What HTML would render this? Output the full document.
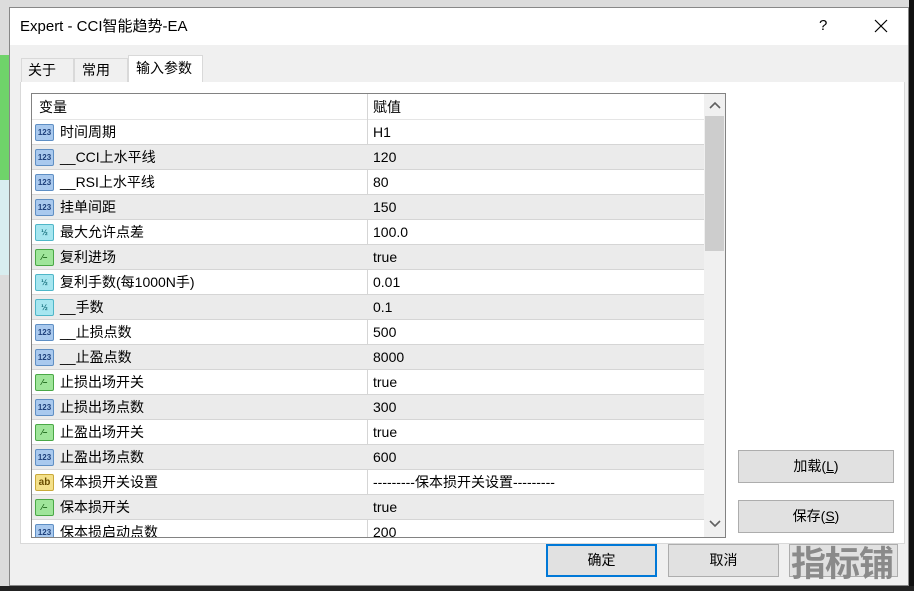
<!DOCTYPE html>
<html><head><meta charset="utf-8"><style>
*{margin:0;padding:0;box-sizing:border-box}
body{width:914px;height:591px;overflow:hidden;background:#dcdcdc;position:relative;font-family:"Liberation Sans","Noto Sans CJK SC",sans-serif;font-size:14px;line-height:17px;color:#000}
.a{position:absolute}
.row{position:absolute;left:0;width:672px;height:25px;border-bottom:1px solid #d5d5d5}
.row.g{background:#ebebeb}
.row span{position:absolute;top:4px;line-height:17px}
.ic{position:absolute;left:3px;top:4px;width:19px;height:17px;border-radius:2px;font-size:8px;font-weight:bold;text-align:center;line-height:15px}
.n{background:#a9c9ee;border:1px solid #5f8fc4;color:#1d3f7a}
.h{background:#a6e6f0;border:1px solid #4fb6c8;color:#16707d}
.b{background:#9fe59a;border:1px solid #4aa846;color:#145e12}
.s{background:#f4e08a;border:1px solid #c9a93a;color:#6a4d00;font-size:10px}
.btn{position:absolute;background:#e1e1e1;border:1px solid #adadad;text-align:center;font-size:14px}
</style></head><body>
<div class="a" style="left:0;top:55px;width:10px;height:125px;background:#6fd36a"></div>
<div class="a" style="left:0;top:180px;width:10px;height:95px;background:#d8eef0"></div>
<div class="a" style="left:909px;top:0;width:5px;height:591px;background:#111"></div>
<div class="a" style="left:0;top:586px;width:914px;height:5px;background:#222"></div>
<div class="a" style="left:9px;top:7px;width:900px;height:579px;background:#f0f0f0;border:1px solid #888"></div>
<div class="a" style="left:10px;top:8px;width:898px;height:37px;background:#fff"></div>
<div class="a" style="left:20px;top:18px;font-size:15px">Expert - CCI智能趋势-EA</div>
<div class="a" style="left:819px;top:17px;font-size:15px">?</div>
<svg class="a" style="left:874px;top:19px" width="14" height="14"><path d="M1 1L13 13M13 1L1 13" stroke="#000" stroke-width="1.2"/></svg>
<div class="a" style="left:21px;top:58px;width:53px;height:25px;border:1px solid #d9d9d9;border-bottom:none;background:#f0f0f0;padding:3px 0 0 6px">关于</div>
<div class="a" style="left:74px;top:58px;width:54px;height:25px;border:1px solid #d9d9d9;border-bottom:none;background:#f0f0f0;padding:3px 0 0 7px">常用</div>
<div class="a" style="left:128px;top:55px;width:75px;height:28px;border:1px solid #d9d9d9;border-bottom:none;background:#fff;padding:4px 0 0 7px">输入参数</div>
<div class="a" style="left:20px;top:82px;width:885px;height:462px;background:#fff;border:1px solid #d9d9d9;border-top:none"></div>
<div class="a" style="left:129px;top:82px;width:73px;height:2px;background:#fff"></div>
<div class="a" style="left:31px;top:93px;width:695px;height:445px;border:1px solid #828282;background:#fff;overflow:hidden">
 <div class="a" style="left:0;top:0;width:672px;height:26px;border-bottom:1px solid #e5e5e5"><span class="a" style="left:7px;top:5px">变量</span><span class="a" style="left:341px;top:5px">赋值</span></div>
 <div class="a" style="left:335px;top:0;width:1px;height:445px;background:#d5d5d5"></div>
 <div id="rows"></div>
 <div class="a" style="left:672px;top:0;width:21px;height:443px;background:#f0f0f0"></div>
 <div class="a" style="left:673px;top:22px;width:19px;height:135px;background:#cdcdcd"></div>
 <svg class="a" style="left:677px;top:7px" width="12" height="8"><path d="M1 7L6 2L11 7" stroke="#606060" stroke-width="1.6" fill="none"/></svg>
 <svg class="a" style="left:677px;top:426px" width="12" height="8"><path d="M1 1L6 6L11 1" stroke="#606060" stroke-width="1.6" fill="none"/></svg>
</div>
<div class="btn" style="left:738px;top:450px;width:156px;height:33px;line-height:31px">加载(<u>L</u>)</div>
<div class="btn" style="left:738px;top:500px;width:156px;height:33px;line-height:31px">保存(<u>S</u>)</div>
<div class="btn" style="left:546px;top:544px;width:111px;height:33px;line-height:29px;border:2px solid #0078d7">确定</div>
<div class="btn" style="left:668px;top:544px;width:111px;height:33px;line-height:31px">取消</div>
<div class="btn" style="left:789px;top:544px;width:109px;height:33px;line-height:31px"></div>
<div class="a" style="left:791px;top:545px;font-size:35px;line-height:40px;font-weight:bold;color:#8a8a8a;letter-spacing:-1px">指标铺</div>
<script>
var d=[["n","时间周期","H1"],["n","__CCI上水平线","120"],["n","__RSI上水平线","80"],["n","挂单间距","150"],["h","最大允许点差","100.0"],["b","复利进场","true"],["h","复利手数(每1000N手)","0.01"],["h","__手数","0.1"],["n","__止损点数","500"],["n","__止盈点数","8000"],["b","止损出场开关","true"],["n","止损出场点数","300"],["b","止盈出场开关","true"],["n","止盈出场点数","600"],["s","保本损开关设置","---------保本损开关设置---------"],["b","保本损开关","true"],["n","保本损启动点数","200"]];
var t={n:"123",h:"½",b:"⁄–",s:"ab"},h="";
d.forEach(function(r,i){h+='<div class="row'+(i%2?' g':'')+'" style="top:'+(26+25*i)+'px"><div class="ic '+r[0]+'">'+t[r[0]]+'</div><span style="left:28px">'+r[1]+'</span><span style="left:341px">'+r[2]+'</span></div>';});
document.getElementById("rows").innerHTML=h;
</script>
</body></html>
